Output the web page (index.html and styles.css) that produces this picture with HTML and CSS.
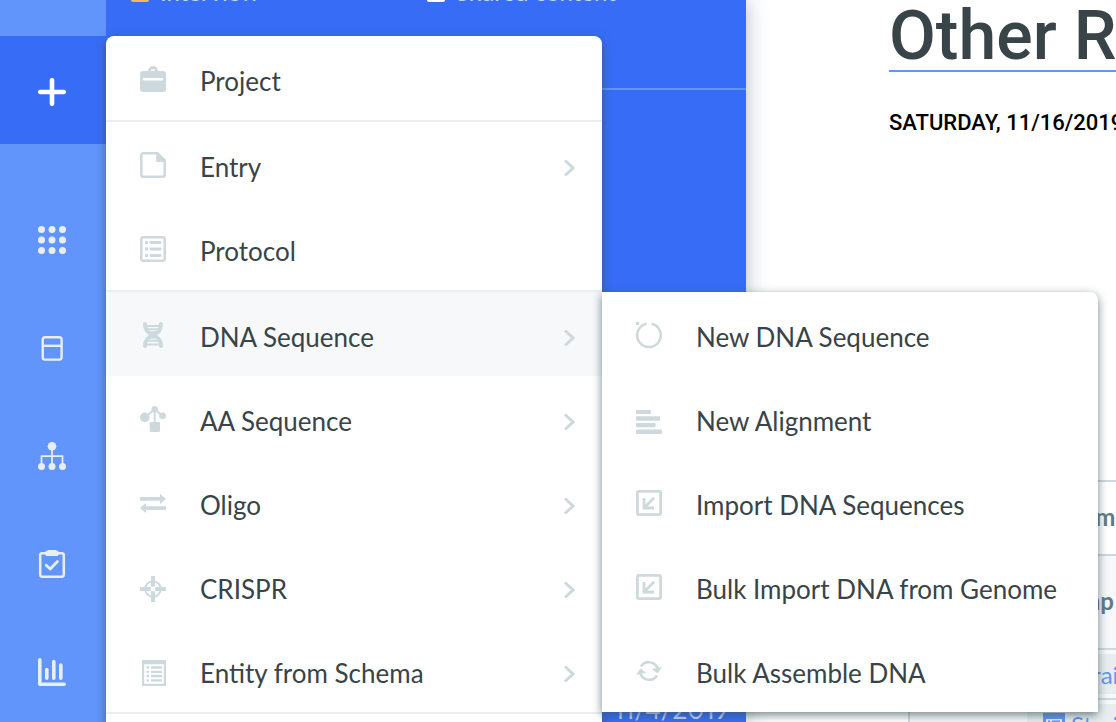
FILE: index.html
```html
<!DOCTYPE html>
<html lang="en">
<head>
    <meta charset="UTF-8">
    <meta name="viewport" content="width=device-width, initial-scale=1.0">
    <title>Notebook</title>
    <link rel="stylesheet" href="styles.css">
</head>
<body>
    <div class="app">
        <!-- Left icon bar -->
        <nav class="sidebar">
            <button class="side-btn add-btn" aria-label="Create">
                <svg width="28" height="28" viewBox="0 0 28 28"><path d="M14 2.2v23.6M2.2 14h23.6" stroke="#fff" stroke-width="4.6" stroke-linecap="round"/></svg>
            </button>
            <div class="side-list">
                <button class="side-btn" aria-label="Apps">
                    <svg width="28" height="28" viewBox="0 0 28 28" fill="#e9eff1"><circle cx="3.5" cy="3.5" r="3.5"/><circle cx="14" cy="3.5" r="3.5"/><circle cx="24.5" cy="3.5" r="3.5"/><circle cx="3.5" cy="14" r="3.5"/><circle cx="14" cy="14" r="3.5"/><circle cx="24.5" cy="14" r="3.5"/><circle cx="3.5" cy="24.5" r="3.5"/><circle cx="14" cy="24.5" r="3.5"/><circle cx="24.5" cy="24.5" r="3.5"/></svg>
                </button>
                <button class="side-btn" aria-label="Inventory">
                    <svg width="28" height="28" viewBox="0 0 28 28" fill="none" stroke="#e9eff1" stroke-width="2.4"><rect x="4.7" y="3.2" width="18.9" height="22.4" rx="2.4"/><path d="M4.7 11.8h18.9"/></svg>
                </button>
                <button class="side-btn" aria-label="Workflows">
                    <svg width="28" height="28" viewBox="0 0 28 28" fill="#e9eff1"><path d="M14 6v18M3.5 24V14.2h21V24" fill="none" stroke="#e9eff1" stroke-width="1.7"/><circle cx="14" cy="4.3" r="4.3"/><circle cx="3.5" cy="24.5" r="3.5"/><circle cx="14" cy="24.5" r="3.5"/><circle cx="24.5" cy="24.5" r="3.5"/></svg>
                </button>
                <button class="side-btn" aria-label="Requests">
                    <svg width="28" height="28" viewBox="0 0 28 28" fill="none" stroke="#e9eff1" stroke-width="2.5"><rect x="2.2" y="3.2" width="23.6" height="23.6" rx="2"/><path d="M10 0h8l2 1.5h1v3L19.5 6h-11L7 4.500v-3h1z" fill="#e9eff1" stroke="none"/><path d="M8.200 15.200l4 3.800 7.200-7.500" stroke-width="2.800" stroke-linecap="round" stroke-linejoin="round"/></svg>
                </button>
                <button class="side-btn" aria-label="Insights">
                    <svg width="28" height="28" viewBox="0 0 28 28" fill="none" stroke="#e9eff1" stroke-width="3.600" stroke-linecap="round" stroke-linejoin="round"><path d="M1.800 1.800v24.400h24.400M8.800 11.500v8.700M15.800 3.500v16.700M22.800 7v13.200"/></svg>
                </button>
            </div>
        </nav>

        <!-- Project panel -->
        <section class="panel">
            <header class="panel-tabs">
                <span class="tab"><span class="tab-icon tab-orange"></span>Interview</span>
                <span class="tab"><span class="tab-icon tab-white"></span>Shared content</span>
            </header>
            <div class="panel-date">11/4/2019</div>
        </section>

        <!-- Document -->
        <main class="doc">
            <h1 class="doc-title">Other Results</h1>
            <p class="doc-date">SATURDAY, 11/16/2019</p>
            <table class="doc-table">
                <tr class="row-name"><td></td><th>Name</th></tr>
                <tr class="row-type"><td></td><th>Samp</th></tr>
                <tr class="row-link"><td></td><td><a class="chip" href="#"><svg width="22" height="22" viewBox="0 0 22 22"><path d="M0 0h22v22H0zM3 6v13h16V6z" fill="#6195fb" fill-rule="evenodd"/><path d="M5 8.500h2M9 8.500h8M5 12.500h2M9 12.500h8M5 16.500h2M9 16.500h8" stroke="#6195fb" stroke-width="2"/></svg>Strain</a></td></tr>
                <tr class="row-link"><td></td><td><a class="chip" href="#"><svg width="22" height="22" viewBox="0 0 22 22"><path d="M0 0h22v22H0zM3 6v13h16V6z" fill="#6195fb" fill-rule="evenodd"/><path d="M5 8.500h2M9 8.500h8M5 12.500h2M9 12.500h8M5 16.500h2M9 16.500h8" stroke="#6195fb" stroke-width="2"/></svg>Strain</a></td></tr>
            </table>
        </main>

        <!-- Create menu -->
        <div class="menu create-menu">
            <div class="menu-group">
                <button class="menu-item">
                    <svg class="icon" viewBox="0 0 26 26"><path d="M8 5.500V5a5 5 0 0 1 10 0v.5h-3.200V5a1.900 1.900 0 0 0-3.800 0v.5z"/><rect y="5" width="26" height="21" rx="3"/><path d="M4 13.300h18" stroke="#fff" stroke-width="2.400" stroke-linecap="round"/></svg>
                    <span class="label">Project</span>
                </button>
            </div>
            <div class="menu-group">
                <button class="menu-item">
                    <svg class="icon" viewBox="0 0 26 26"><path d="M17 1.300H3.300a2 2 0 0 0-2 2v19.400a2 2 0 0 0 2 2h19.400a2 2 0 0 0 2-2V8.500z" fill="none" stroke="#ced9dd" stroke-width="2.500"/><path d="M16.200 0H18l8 8v2h-9.800z"/></svg>
                    <span class="label">Entry</span>
                    <svg class="arrow" viewBox="0 0 12 18"><path d="M2 1.500L10 9l-8 7.500"/></svg>
                </button>
                <button class="menu-item">
                    <svg class="icon" viewBox="0 0 26 26"><rect x="1.300" y="1.300" width="23.400" height="23.400" rx="2" fill="none" stroke="#ced9dd" stroke-width="2.500"/><path d="M5 6.500h3M5 13h3M5 19.500h3" stroke="#ced9dd" stroke-width="3"/><path d="M10.800 6.500h9.400M10.800 13h9.400M10.800 19.500h9.400" stroke="#ced9dd" stroke-width="2.800" stroke-linecap="round"/></svg>
                    <span class="label">Protocol</span>
                </button>
            </div>
            <div class="menu-group">
                <button class="menu-item active">
                    <svg class="icon" viewBox="0 0 26 26"><path d="M5 2C5 9 9 11.500 13 13s8 4 8 11M21 2c0 7-4 9.500-8 11s-8 4-8 11" fill="none" stroke="#ced9dd" stroke-width="4" stroke-linecap="round"/><path d="M6 4h14M7 7.200h12M9 10.200h8M9 15.800h8M7 18.800h12M6 22.500h14" stroke="#ced9dd" stroke-width="1.900"/></svg>
                    <span class="label">DNA Sequence</span>
                    <svg class="arrow" viewBox="0 0 12 18"><path d="M2 1.500L10 9l-8 7.500"/></svg>
                </button>
                <button class="menu-item">
                    <svg class="icon" viewBox="0 0 26 26"><path d="M5 11.200l9.700-8 7.800 6.500M14.700 3v15" fill="none" stroke="#ced9dd" stroke-width="1.900"/><circle cx="4.800" cy="11.400" r="4.800"/><circle cx="14.700" cy="3.200" r="3.200"/><circle cx="22.600" cy="9.800" r="3.400"/><rect x="9.700" y="16" width="10.300" height="10" rx="1.200"/></svg>
                    <span class="label">AA Sequence</span>
                    <svg class="arrow" viewBox="0 0 12 18"><path d="M2 1.500L10 9l-8 7.500"/></svg>
                </button>
                <button class="menu-item">
                    <svg class="icon" viewBox="0 0 26 26"><path d="M0 7h20V3.800l6 5.100-6 5.100v-3.200H0zM26 20H6v3.200l-6-5.100 6-5.100v3.200h20z"/></svg>
                    <span class="label">Oligo</span>
                    <svg class="arrow" viewBox="0 0 12 18"><path d="M2 1.500L10 9l-8 7.500"/></svg>
                </button>
                <button class="menu-item">
                    <svg class="icon" viewBox="0 0 26 26"><g transform="translate(0 2)"><circle cx="13" cy="13" r="7.800" fill="none" stroke="#ced9dd" stroke-width="1.900"/><path d="M13 0v10.800M13 15.200V26M0 13h10.800M15.200 13H26" stroke="#ced9dd" stroke-width="4"/></g></svg>
                    <span class="label">CRISPR</span>
                    <svg class="arrow" viewBox="0 0 12 18"><path d="M2 1.500L10 9l-8 7.500"/></svg>
                </button>
                <button class="menu-item">
                    <svg class="icon" viewBox="0 0 26 26"><g transform="translate(0 2)"><path d="M2 0h24v26H2zM4.200 4.200v19.600h19.600V4.200z" fill-rule="evenodd"/><path d="M6.500 7.500H9M11 7.500h11M6.500 11.800H9M11 11.800h11M6.500 16H9M11 16h11M6.500 20.300H9M11 20.300h11" stroke="#ced9dd" stroke-width="2.300"/></g></svg>
                    <span class="label">Entity from Schema</span>
                    <svg class="arrow" viewBox="0 0 12 18"><path d="M2 1.500L10 9l-8 7.500"/></svg>
                </button>
            </div>
        </div>

        <!-- DNA Sequence submenu -->
        <div class="menu sub-menu">
            <button class="menu-item">
                <svg class="icon" viewBox="0 0 26 26"><path d="M15.500 1.700a11.800 11.800 0 1 1-5 0" fill="none" stroke="#ced9dd" stroke-width="2.500"/><path d="M0 0h3v3H0z"/></svg>
                <span class="label">New DNA Sequence</span>
            </button>
            <button class="menu-item">
                <svg class="icon" viewBox="0 0 26 26"><rect y="4" width="15" height="4" rx="1"/><rect y="10.300" width="24" height="4.400" rx="1"/><rect y="17" width="19.500" height="4.300" rx="1"/><rect y="23.600" width="26" height="4.400" rx="1"/></svg>
                <span class="label">New Alignment</span>
            </button>
            <button class="menu-item">
                <svg class="icon" viewBox="0 0 26 26"><g fill="none" stroke="#ced9dd" stroke-width="2.800"><rect x="1.400" y="1.400" width="23.200" height="23.200" rx="1.500"/><path d="M8 8v10h10M18.200 7.800L8.500 17.500"/></g></svg>
                <span class="label">Import DNA Sequences</span>
            </button>
            <button class="menu-item">
                <svg class="icon" viewBox="0 0 26 26"><g fill="none" stroke="#ced9dd" stroke-width="2.800"><rect x="1.400" y="1.400" width="23.200" height="23.200" rx="1.500"/><path d="M8 8v10h10M18.200 7.800L8.500 17.500"/></g></svg>
                <span class="label">Bulk Import DNA from Genome</span>
            </button>
            <button class="menu-item">
                <svg class="icon" viewBox="0 0 26 26"><path d="M5 8.500a9.300 9.300 0 0 1 17 3.500M21 17.500a9.300 9.300 0 0 1-17-3.500" fill="none" stroke="#ced9dd" stroke-width="2.600"/><path d="M15.500 11l10.500-1.800-4.500 6.300zM10.500 15L0 16.800l4.500-6.300z"/></svg>
                <span class="label">Bulk Assemble DNA</span>
            </button>
        </div>
    </div>
</body>
</html>
```

FILE: styles.css
```css
* {
    box-sizing: border-box;
}
body {
    margin: 0;
    font-family: Lato, "Liberation Sans", sans-serif;
    font-size: 26px;
    color: #384447;
    background: #fff;
}
button {
    font: inherit;
    color: inherit;
    border: none;
    padding: 0;
    cursor: pointer;
}
.app {
    position: relative;
    display: flex;
    height: 100vh;
    overflow: hidden;
}

/* Sidebar */
.sidebar {
    position: relative;
    z-index: 2;
    width: 106px;
    flex-shrink: 0;
    padding-top: 36px;
    background: #6195fb;
}
.side-btn {
    display: flex;
    align-items: center;
    justify-content: center;
    width: 100%;
    height: 108px;
    padding: 0 2px 0 0;
    background: none;
}
.add-btn {
    padding-top: 4px;
    background: #376df6;
}
.side-list {
    padding-top: 42px;
}

/* Blue panel */
.panel {
    display: flex;
    flex-direction: column;
    justify-content: space-between;
    width: 640px;
    flex-shrink: 0;
    background: #376df6;
    box-shadow: 0 0 20px rgba(56, 90, 100, 0.4);
    z-index: 1;
}
.panel-tabs {
    display: flex;
    height: 90px;
    padding-left: 25px;
    border-bottom: 2px solid #6195fb;
    overflow: hidden;
}
/* tabs are scrolled almost out of view */
.tab {
    display: flex;
    align-items: flex-end;
    gap: 11px;
    width: 296px;
    height: 32px;
    margin-top: -30px;
    font-size: 24px;
    line-height: 20px;
    color: #c8d8fd;
    white-space: nowrap;
}
.tab-icon {
    width: 18px;
    height: 22px;
    border-radius: 2px;
}
.tab-orange {
    background: #f8b668;
}
.tab-white {
    background: #fff;
}
.panel-date {
    padding-left: 508px;
    font-variant-numeric: proportional-nums;
    line-height: 26px;
    color: #c8d8fd;
}

/* Document */
.doc {
    flex: 1;
    min-width: 0;
    padding-left: 143px;
    white-space: nowrap;
    overflow: hidden;
}
.doc-title {
    height: 72px;
    margin: 0;
    border-bottom: 2px solid #6195fb;
    font-family: Roboto, sans-serif;
    font-size: 68px;
    font-weight: 500;
    line-height: 72px;
}
.doc-date {
    margin: 34px 0 0;
    font-family: Roboto, sans-serif;
    font-size: 22px;
    font-weight: 500;
    line-height: 34px;
    color: #000;
}
.doc-table {
    width: 400px;
    margin: 340px 0 0 19px;
    border-collapse: collapse;
    color: #627a82;
}
.doc-table td,
.doc-table th {
    padding: 0;
    border: 2px solid #ced9dd;
    text-align: left;
}
.doc-table td:first-child {
    width: 118px;
    border-right: none;
}
.doc-table td + * {
    border-left: none;
}
.doc-table th {
    padding: 0 0 4px 28px;
    font-size: 24px;
}
.doc-table .row-name th {
    padding-left: 38px;
}
.row-name {
    height: 74px;
}
.row-type {
    height: 94px;
    background: #f6f8fa;
}
.row-link {
    height: 50px;
    background: #f6f8fa;
}
.chip {
    display: flex;
    align-items: center;
    gap: 6px;
    height: 40px;
    padding-left: 16px;
    background: #e8eef0;
    color: #6195fb;
    font-size: 24px;
    text-decoration: none;
}

/* Menus */
.menu {
    position: absolute;
    z-index: 3;
    width: 496px;
    background: #fff;
    box-shadow: 0 3px 10px rgba(56, 80, 85, 0.7);
}
.create-menu {
    top: 36px;
    bottom: -8px;
    left: 106px;
    border-radius: 8px 8px 0 0;
}
.sub-menu {
    top: 292px;
    left: 602px;
    border-radius: 0 8px 0 0;
}
.menu-group {
    border-bottom: 2px solid #e9eff2;
}
.menu-item {
    display: flex;
    align-items: center;
    width: 100%;
    height: 84px;
    padding: 2px 27px 0 34px;
    background: none;
    text-align: left;
}
.menu-item.active {
    background: #f6f8fa;
}
.label {
    flex: 1;
    padding: 4px 0 0 34px;
    line-height: 32px;
}
.icon {
    width: 26px;
    height: 26px;
    fill: #ced9dd;
    overflow: visible;
}
.arrow {
    width: 12px;
    height: 18px;
    margin-top: 6px;
    fill: none;
    stroke: #ced9dd;
    stroke-width: 3;
}
```
